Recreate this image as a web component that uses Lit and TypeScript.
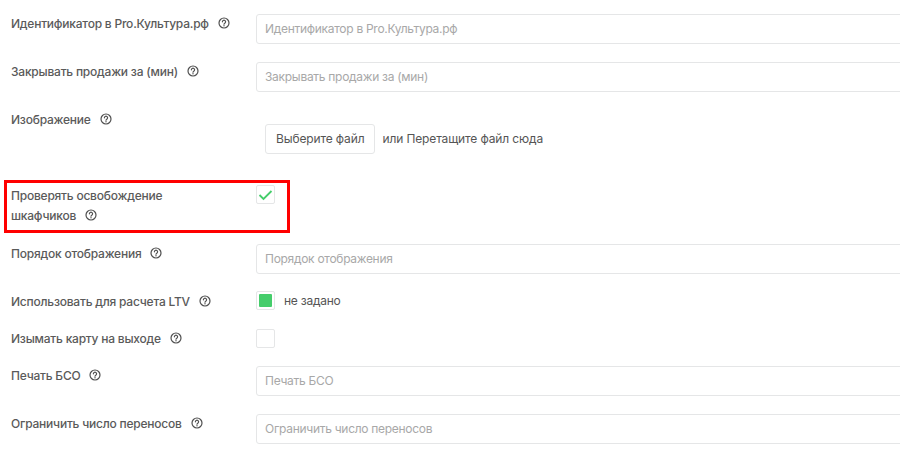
import { LitElement, html, css } from "lit";
import { customElement } from "lit/decorators.js";

const help = html`<svg class="help" width="12" height="12" viewBox="0 0 12 12" fill="none" stroke="#505050" stroke-width="1.2">
  <circle cx="6" cy="6" r="5"/>
  <path d="M4.4 4.8a1.6 1.6 0 1 1 2.4 1.4c-.5.3-.8.5-.8 1" stroke-linecap="round"/>
  <circle cx="6" cy="8.7" r=".7" fill="#505050" stroke="none"/>
</svg>`;

@customElement("app-root")
export class AppRoot extends LitElement {
  static styles = css`
    :host { display: block; width: 900px; height: 458px; overflow: hidden; background: #fff;
      font-family: "Inter", "Noto Sans", sans-serif; font-size: 12px; color: #555; }
    .form { padding-top: 14px; display: flex; flex-direction: column; }
    .row { display: grid; grid-template-columns: 256px 660px; margin-bottom: 18px; position: relative; }
    .label { padding-left: 11px; line-height: 20px; font-weight: 500; color: #5a5a5a; letter-spacing: -0.22px; }
    .narrow { width: 175px; }
    .help { margin-left: 9px; vertical-align: -1px; }
    .input { height: 30px; box-sizing: border-box; border: 1px solid #e5e6e7; border-radius: 3px;
      padding: 0 8px 2px; display: flex; align-items: center; color: #a8a8a8; letter-spacing: -0.29px; }
    .file { padding-top: 14px; margin-bottom: 14px; display: flex; align-items: center; gap: 7px; padding-left: 9px;
      letter-spacing: -0.13px; }
    .btn { height: 30px; box-sizing: border-box; border: 1px solid #e5e6e7; border-radius: 3px;
      padding: 0 10px 2px; display: flex; align-items: center; color: #555; }
    .hint { padding-bottom: 2px; }
    .box { width: 19px; height: 19px; flex: none; box-sizing: border-box; border: 1px solid #e5e6e7; border-radius: 2px;
      display: flex; align-items: center; justify-content: center; }
    .check-row { height: 19px; margin-bottom: 18px; }
    .check-cell { display: flex; align-items: center; gap: 9px; height: 19px; letter-spacing: -0.25px; }
    .up { margin-top: -1px; }
    .dot { width: 13px; height: 13px; background: #45cd6b; border-radius: 1px; }
    .red { position: absolute; left: 4px; top: -6px; width: 286px; height: 53px; box-sizing: border-box;
      border: 3px solid #f00; pointer-events: none; }
  `;

  private inputRow(t: string) {
    return html`<div class="row"><div class="label">${t}${help}</div><div class="input">${t}</div></div>`;
  }

  render() {
    return html`<div class="form">
      ${this.inputRow("Идентификатор в Pro.Культура.рф")}
      ${this.inputRow("Закрывать продажи за (мин)")}
      <div class="row">
        <div class="label">Изображение${help}</div>
        <div class="file"><div class="btn">Выберите файл</div><span class="hint">или Перетащите файл сюда</span></div>
      </div>
      <div class="row">
        <div class="label narrow">Проверять освобождение шкафчиков${help}</div>
        <div class="check-cell up"><div class="box">
          <svg width="15" height="12" viewBox="0 0 15 12" fill="none" stroke="#45cd6b" stroke-width="1.8"><path d="M1.5 6 5.5 10 13.5 2"/></svg>
        </div></div>
        <div class="red"></div>
      </div>
      ${this.inputRow("Порядок отображения")}
      <div class="row check-row">
        <div class="label">Использовать для расчета LTV${help}</div>
        <div class="check-cell up"><div class="box"><div class="dot"></div></div><span>не задано</span></div>
      </div>
      <div class="row check-row">
        <div class="label">Изымать карту на выходе${help}</div>
        <div class="check-cell"><div class="box"></div></div>
      </div>
      ${this.inputRow("Печать БСО")}
      ${this.inputRow("Ограничить число переносов")}
    </div>`;
  }
}
